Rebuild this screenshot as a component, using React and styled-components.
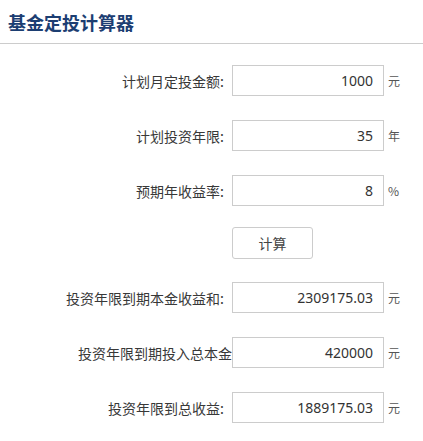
import React from "react";
import styled, { createGlobalStyle } from "styled-components";

const GlobalStyle = createGlobalStyle`
  body {
    margin: 0;
    background: #fff;
    font-family: "Noto Sans", "Noto Sans CJK SC", sans-serif;
    color: #333;
  }
`;

const Page = styled.div`
  width: 423px;
  height: 441px;
  overflow: hidden;
`;

const Header = styled.div`
  height: 44px;
  border-bottom: 1px solid #cccccc;
  box-sizing: border-box;
  padding: 10px 0 0 8px;
`;

const Title = styled.h1`
  margin: 0;
  font-size: 18px;
  line-height: 24px;
  font-weight: bold;
  color: #1c3e72;
  font-family: "Noto Sans CJK SC", sans-serif;
`;

const Form = styled.div`
  display: flex;
  flex-direction: column;
  gap: 24px;
  padding: 21px 0 0 64px;
`;

const Row = styled.div`
  display: flex;
  align-items: center;
  height: 31px;
`;

// labels without a colon sit flush against the field
const Label = styled.label`
  flex-shrink: 0;
  width: ${p => (p.$flush ? "168px" : "160px")};
  margin-right: ${p => (p.$flush ? "0" : "8px")};
  text-align: right;
  white-space: nowrap;
  font-size: 14px;
  color: #383838;
  font-family: "Noto Sans CJK SC", sans-serif;
`;

const Field = styled.input`
  box-sizing: border-box;
  width: 152px;
  height: 31px;
  border: 1px solid #cccccc;
  padding: 0 10px;
  text-align: right;
  font-size: 14px;
  color: #333;
  font-family: "Noto Sans", sans-serif;
  background: #fff;
  outline: none;
`;

const Unit = styled.span`
  margin-left: 4px;
  font-size: 12px;
  color: #555;
  font-family: "Noto Sans CJK SC", sans-serif;
`;

const ButtonRow = styled.div`
  display: flex;
  padding-left: 168px;
  margin: -3px 0 -1px;
`;

const Button = styled.button`
  width: 81px;
  height: 32px;
  border: 1px solid #cccccc;
  border-radius: 3px;
  background: #fff;
  font-size: 14px;
  color: #444;
  font-family: "Noto Sans CJK SC", sans-serif;
  cursor: pointer;
`;

const inputs = [
  { label: "计划月定投金额:", value: "1000", unit: "元" },
  { label: "计划投资年限:", value: "35", unit: "年" },
  { label: "预期年收益率:", value: "8", unit: "%" },
];

const results = [
  { label: "投资年限到期本金收益和:", value: "2309175.03", unit: "元" },
  { label: "投资年限到期投入总本金", value: "420000", unit: "元", flush: true },
  { label: "投资年限到总收益:", value: "1889175.03", unit: "元" },
];

const FieldRow = ({ label, value, unit, flush }) => (
  <Row>
    <Label $flush={flush}>{label}</Label>
    <Field defaultValue={value} />
    <Unit>{unit}</Unit>
  </Row>
);

export default function App() {
  return (
    <Page>
      <GlobalStyle />
      <Header>
        <Title>基金定投计算器</Title>
      </Header>
      <Form>
        {inputs.map(item => (
          <FieldRow key={item.label} {...item} />
        ))}
        <ButtonRow>
          <Button type="button">计算</Button>
        </ButtonRow>
        {results.map(item => (
          <FieldRow key={item.label} {...item} />
        ))}
      </Form>
    </Page>
  );
}
